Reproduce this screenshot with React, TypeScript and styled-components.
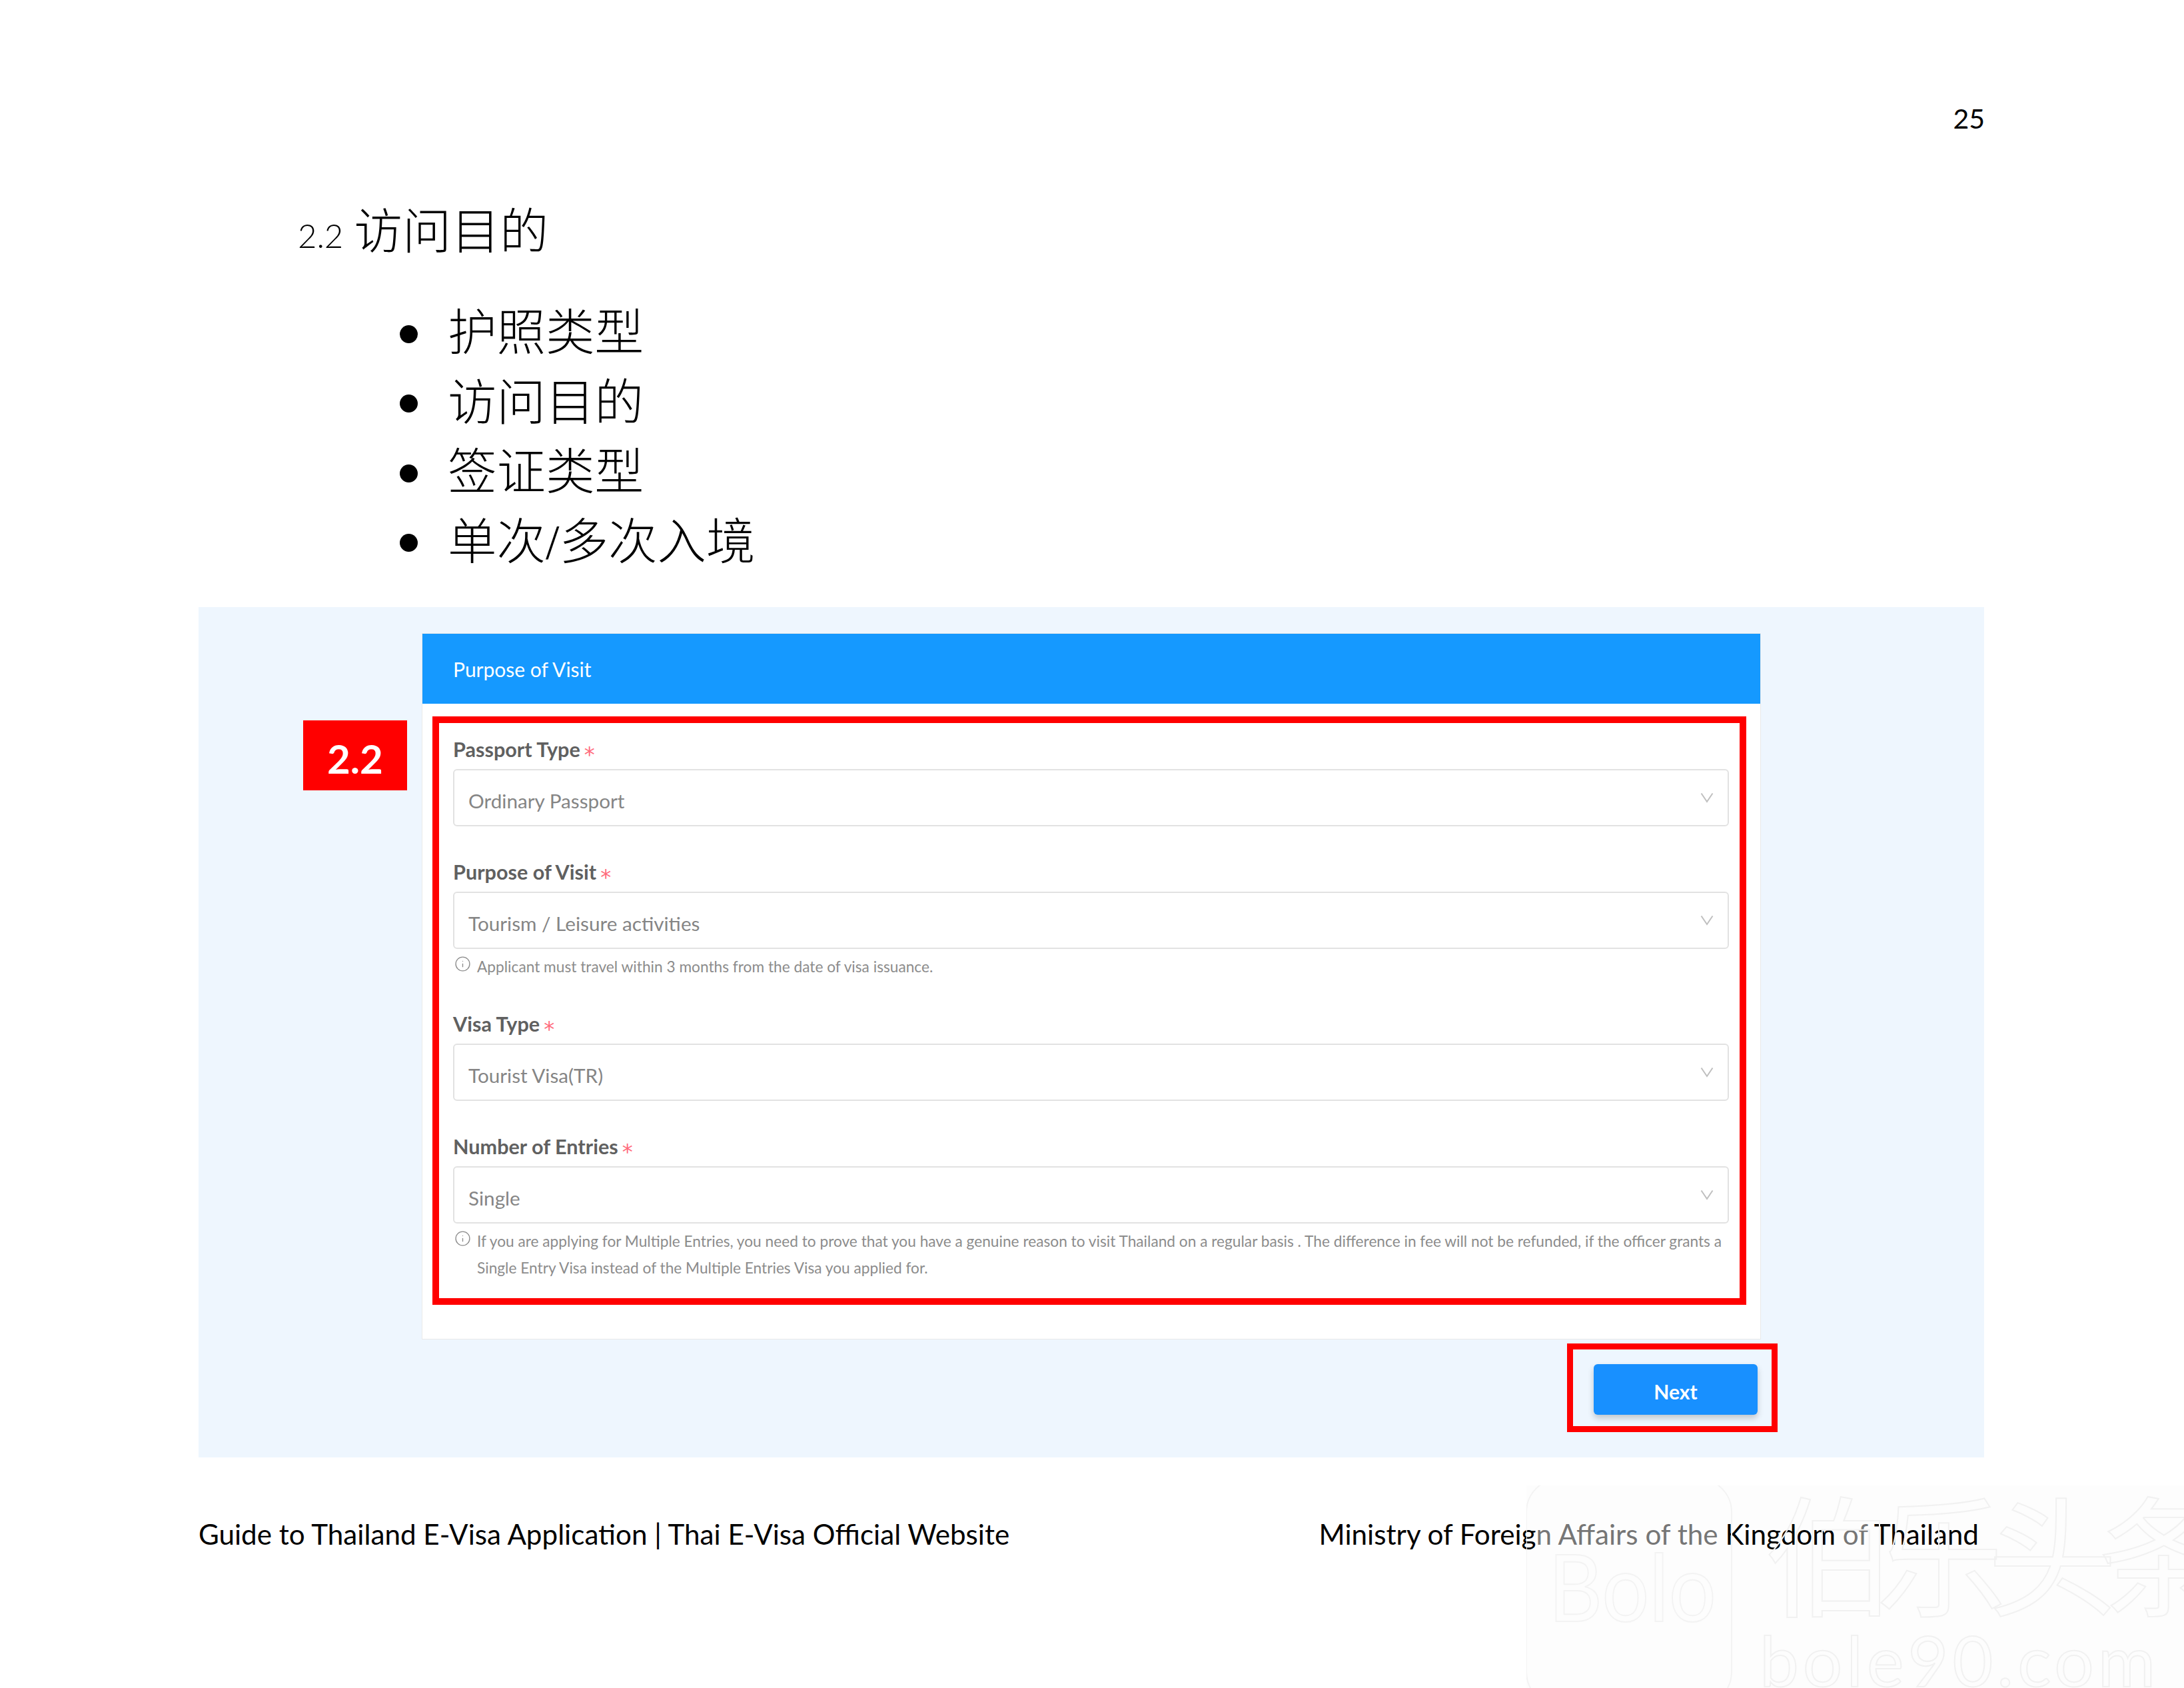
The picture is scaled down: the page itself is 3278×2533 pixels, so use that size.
import React from 'react';
import styled, { createGlobalStyle } from 'styled-components';
import { Info } from 'lucide-react';

const GlobalStyle = createGlobalStyle`
  html, body {
    margin: 0;
    padding: 0;
    background: #fff;
  }
`;

const CJK_STACK = `"Liberation Serif", "Noto Sans CJK SC", serif`;
const DOC_FONT = `Lato, "Noto Sans CJK SC", sans-serif`;
const FORM_FONT = `Lato, "Open Sans", sans-serif`;

const Page = styled.div`
  position: relative;
  width: 3278px;
  height: 2533px;
  overflow: hidden;
  background: #fff;
  color: #000;
  font-family: ${DOC_FONT};
`;

const PageNumber = styled.div`
  padding: 150px 299px 0 0;
  text-align: right;
  font-size: 41px;
  line-height: 56px;
`;

const Heading = styled.h2`
  display: flex;
  align-items: center;
  gap: 16px;
  margin: 90px 0 0 447px;
  height: 90px;
  font-weight: 300;
  font-size: 73px;
  font-family: ${CJK_STACK};
`;

const HeadingNumber = styled.span`
  padding-top: 24px;
  font-family: ${DOC_FONT};
  font-size: 49px;
  font-weight: 300;
`;

const BulletList = styled.ul`
  list-style: none;
  margin: 55px 0 52px 600px;
  padding: 0;
`;

const Bullet = styled.li`
  display: flex;
  align-items: center;
  height: 104.5px;
  font-size: 73.5px;
  font-family: ${CJK_STACK};
  font-weight: 300;

  &::before {
    content: '';
    width: 27px;
    height: 27px;
    margin: 16px 45px 0 0;
    border-radius: 50%;
    background: #000;
  }
`;

const Panel = styled.section`
  position: relative;
  box-sizing: border-box;
  width: 2680px;
  height: 1276px;
  margin-left: 298px;
  padding: 39px 335px 0;
  background: #eef6fe;
  font-family: ${FORM_FONT};
`;

const Card = styled.div`
  position: relative;
  box-sizing: border-box;
  height: 1060px;
  background: #fff;
  border: 1px solid #e9e9e9;
`;

const CardHeader = styled.div`
  display: flex;
  align-items: center;
  height: 105px;
  padding-left: 46px;
  background: #1599ff;
  color: #fff;
  font-size: 30px;
`;

const CardBody = styled.div`
  padding: 49px 47px 0 46px;
`;

const Field = styled.div<{ $tight?: boolean }>`
  margin-bottom: ${(p) => (p.$tight ? '0' : '49px')};
`;

const Label = styled.div`
  height: 40px;
  margin-bottom: 9px;
  color: #606060;
  font-size: 30.6px;
  font-weight: 700;
  line-height: 40px;
`;

const Required = styled.span`
  margin-left: 6px;
  color: #ff6b7b;
  font-family: "DejaVu Sans", sans-serif;
  font-size: 32px;
  font-weight: 400;
  line-height: 0;
  vertical-align: -7px;
`;

const Select = styled.div`
  display: flex;
  align-items: center;
  justify-content: space-between;
  box-sizing: border-box;
  height: 86px;
  padding: 0 21px;
  border: 2px solid #e2e2e2;
  border-radius: 6px;
  color: #858585;
  font-size: 29.7px;
`;

const SelectValue = styled.span`
  padding-top: 8px;
`;

const Hint = styled.div`
  display: flex;
  align-items: flex-start;
  gap: 9px;
  margin: 9px 0 46px 2px;
  color: #8c8c8c;
  font-size: 22.7px;
  line-height: 40px;
`;

const HintIcon = styled(Info)`
  flex: none;
  width: 25px;
  height: 25px;
  margin-top: 1px;
  color: #8c8c8c;
`;

const HintText = styled.div`
  margin-top: -2px;
`;

const ButtonRow = styled.div`
  display: flex;
  justify-content: flex-end;
  margin: 37px 5px 0 0;
`;

const NextButton = styled.button`
  width: 246px;
  height: 76px;
  padding: 6px 0 0;
  border: 0;
  border-radius: 6px;
  background: #1890ff;
  box-shadow: 0 5px 10px rgba(0, 0, 0, 0.2);
  color: #fff;
  font-family: ${FORM_FONT};
  font-size: 30px;
  font-weight: 700;
`;

const FormFrame = styled.div`
  position: absolute;
  left: 15px;
  top: 124px;
  box-sizing: border-box;
  width: 1972px;
  height: 883px;
  border: 10px solid #ff0000;
`;

const NextFrame = styled.div`
  position: absolute;
  left: 2054px;
  top: 1105px;
  box-sizing: border-box;
  width: 316px;
  height: 133px;
  border: 9px solid #ff0000;
`;

const StepBadge = styled.div`
  position: absolute;
  left: 157px;
  top: 170px;
  display: flex;
  align-items: center;
  justify-content: center;
  box-sizing: border-box;
  width: 156px;
  height: 105px;
  padding-top: 8px;
  background: #ff0000;
  color: #fff;
  font-family: ${DOC_FONT};
  font-size: 60px;
  font-weight: 700;
`;

const Footer = styled.footer`
  display: flex;
  justify-content: space-between;
  margin: 85px 308px 0 298px;
  font-size: 42.2px;
  line-height: 60px;
`;

const Faded = styled.span`
  color: #777;
`;

const Watermark = styled.svg`
  position: absolute;
  left: 2291px;
  top: 2229px;
  width: 987px;
  height: 304px;
  pointer-events: none;
`;

const Chevron = () => (
  <svg width="20" height="16" viewBox="0 0 20 16" fill="none">
    <path d="M1.5 1.5 L10 14 L18.5 1.5" stroke="#bfbfbf" strokeWidth="2" />
  </svg>
);

const SelectField: React.FC<{ label: string; value: string; tight?: boolean }> = ({ label, value, tight }) => (
  <Field $tight={tight}>
    <Label>
      {label}
      <Required>*</Required>
    </Label>
    <Select>
      <SelectValue>{value}</SelectValue>
      <Chevron />
    </Select>
  </Field>
);

export default function App() {
  return (
    <Page>
      <GlobalStyle />
      <PageNumber>25</PageNumber>
      <Heading>
        <HeadingNumber>2.2</HeadingNumber>
        访问目的
      </Heading>
      <BulletList>
        <Bullet>护照类型</Bullet>
        <Bullet>访问目的</Bullet>
        <Bullet>签证类型</Bullet>
        <Bullet>单次/多次入境</Bullet>
      </BulletList>

      <Panel>
        <Card>
          <CardHeader>Purpose of Visit</CardHeader>
          <CardBody>
            <SelectField label="Passport Type" value="Ordinary Passport" />
            <SelectField label="Purpose of Visit" value="Tourism / Leisure activities" tight />
            <Hint>
              <HintIcon strokeWidth={1.3} />
              <HintText>Applicant must travel within 3 months from the date of visa issuance.</HintText>
            </Hint>
            <SelectField label="Visa Type" value="Tourist Visa(TR)" />
            <SelectField label="Number of Entries" value="Single" tight />
            <Hint>
              <HintIcon strokeWidth={1.3} />
              <HintText>
                If you are applying for Multiple Entries, you need to prove that you have a genuine reason to visit
                Thailand on a regular basis . The difference in fee will not be refunded, if the officer grants a Single
                Entry Visa instead of the Multiple Entries Visa you applied for.
              </HintText>
            </Hint>
          </CardBody>
          <FormFrame />
        </Card>
        <ButtonRow>
          <NextButton>Next</NextButton>
        </ButtonRow>
        <StepBadge>2.2</StepBadge>
        <NextFrame />
      </Panel>

      <Footer>
        <span>Guide to Thailand E-Visa Application | Thai E-Visa Official Website</span>
        <span>
          Ministry of Foreig<Faded>n Affairs of the</Faded> Kingdom <Faded>of</Faded> Thailand
        </span>
      </Footer>

      <Watermark viewBox="0 0 987 304">
        <rect x="0" y="0" width="987" height="304" fill="#000" fillOpacity="0.006" />
        <rect x="0" y="-10" width="308" height="340" rx="50" fill="none" stroke="#f3f3f3" strokeWidth="2" />
        <text
          x="33"
          y="204"
          fontFamily="Lato, sans-serif"
          fontSize="140"
          textLength={252}
          lengthAdjust="spacingAndGlyphs"
          fill="none"
          stroke="#f3f3f3"
          strokeWidth="2"
        >
          Bolo
        </text>
        <text
          x="358"
          y="182"
          fontFamily="'Noto Sans CJK SC', sans-serif"
          fontSize="195"
          letterSpacing="-28"
          fill="none"
          stroke="#f1f1f1"
          strokeWidth="2"
        >
          伯乐头条
        </text>
        <text x="350" y="302" fontFamily="Lato, sans-serif" fontSize="105" letterSpacing="6" fill="none" stroke="#f1f1f1" strokeWidth="2">
          bole90.com
        </text>
      </Watermark>
    </Page>
  );
}
